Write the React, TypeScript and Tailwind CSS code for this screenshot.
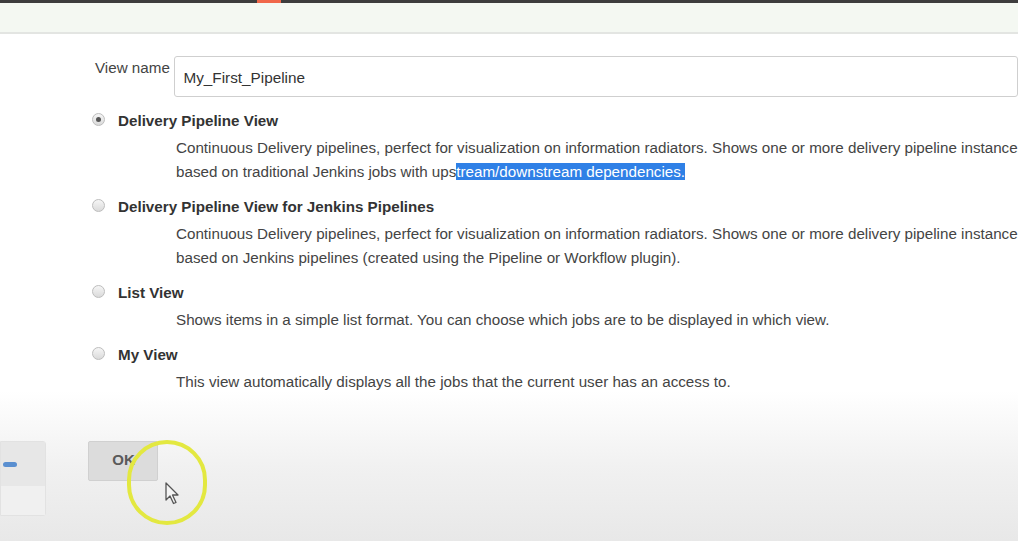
const options = [
  {
    title: "Delivery Pipeline View",
    checked: true,
    lines: [
      "Continuous Delivery pipelines, perfect for visualization on information radiators. Shows one or more delivery pipeline instances",
      "based on traditional Jenkins jobs with ups|tream/downstream dependencies.",
    ],
  },
  {
    title: "Delivery Pipeline View for Jenkins Pipelines",
    checked: false,
    lines: [
      "Continuous Delivery pipelines, perfect for visualization on information radiators. Shows one or more delivery pipeline instances",
      "based on Jenkins pipelines (created using the Pipeline or Workflow plugin).",
    ],
  },
  {
    title: "List View",
    checked: false,
    lines: ["Shows items in a simple list format. You can choose which jobs are to be displayed in which view."],
  },
  {
    title: "My View",
    checked: false,
    lines: ["This view automatically displays all the jobs that the current user has an access to."],
  },
];

function Radio({ checked }: { checked: boolean }) {
  return (
    <span className="w-[13px] h-[13px] rounded-full border border-[#bdbdbd] bg-gradient-to-b from-[#f6f6f6] to-[#dadada] flex items-center justify-center shrink-0">
      {checked && <span className="w-[5px] h-[5px] rounded-full bg-[#555]" />}
    </span>
  );
}

function DescLine({ text }: { text: string }) {
  if (!text.includes("|")) return <div>{text}</div>;
  const [plain, selected] = text.split("|");
  return (
    <div>
      {plain}
      <span className="bg-[#2f80e6] text-white">{selected}</span>
    </div>
  );
}

function Cursor() {
  return (
    <svg
      className="absolute left-[165px] top-[482px]"
      width="16"
      height="24"
      viewBox="0 0 16 24"
    >
      <path
        d="M1 1 L1 18 L5 14 L8.5 21.5 L11 20.5 L7.5 13 L13 13 Z"
        fill="#f4f4f4"
        stroke="#555"
        strokeWidth="1.3"
        strokeLinejoin="round"
      />
    </svg>
  );
}

export default function App() {
  return (
    <div
      className="relative w-[1018px] h-[541px] overflow-hidden bg-white text-[#333]"
      style={{ fontFamily: '"Liberation Sans", Arial, sans-serif' }}
    >
      <div className="flex h-[3px] bg-[#3d3d3d]">
        <div className="ml-[257px] w-[24px] bg-[#f0674a]" />
      </div>
      <div className="h-[31px] bg-[#f4f8f2] border-b-2 border-[#e3e5e2]" />

      <div className="pl-[95px] pt-[22px]">
        <div className="flex items-start">
          <span className="w-[81px] pt-[1px] text-[15.2px] text-[#444]">View name</span>
          <div className="w-[860px] h-[41px] border border-[#cfcfcf] rounded-[3px] flex items-center pl-[8px] pt-[4px] text-[15.3px] text-[#333]">
            My_First_Pipeline
          </div>
        </div>

        <div className="mt-[14px] flex flex-col gap-[13px]">
          {options.map((o) => (
            <div key={o.title}>
              <div className="flex items-center h-[20px]">
                <span className="-ml-[3px] -mt-[4px]">
                  <Radio checked={o.checked} />
                </span>
                <span className="ml-[13px] text-[15.2px] font-bold text-[#333]">{o.title}</span>
              </div>
              <div className="ml-[81px] mt-[5px] whitespace-nowrap text-[15.2px] leading-[24px] text-[#444]">
                {o.lines.map((l) => (
                  <DescLine key={l} text={l} />
                ))}
              </div>
            </div>
          ))}
        </div>
      </div>

      <div className="absolute left-0 right-0 bottom-0 h-[150px] bg-gradient-to-b from-white/0 via-[#f1f1f1] to-[#e8e8e8]">
        <div className="flex items-start pt-[50px]">
          <div className="w-[46px] h-[75px] flex flex-col border border-[#e2e2e2] rounded-r-[3px]">
            <div className="h-[44px] bg-[#e7e7e7] flex items-center">
              <span className="ml-[2px] w-[14px] h-[5px] rounded-full bg-[#5a8fd0]" />
            </div>
            <div className="flex-1 bg-[#f0f0f0]" />
          </div>
          <button className="ml-[42px] w-[70px] h-[40px] bg-[#dcdcdc] border border-[#d0d0d0] rounded-[2px] text-[15px] font-bold text-[#5a5a5a] flex items-center justify-center pb-[1px] pl-[1px]">
            OK
          </button>
        </div>
      </div>

      <div className="absolute left-[127px] top-[440px] w-[80px] h-[85px] rounded-full border-[4px] border-[#e3e840]" />
      <Cursor />
    </div>
  );
}
